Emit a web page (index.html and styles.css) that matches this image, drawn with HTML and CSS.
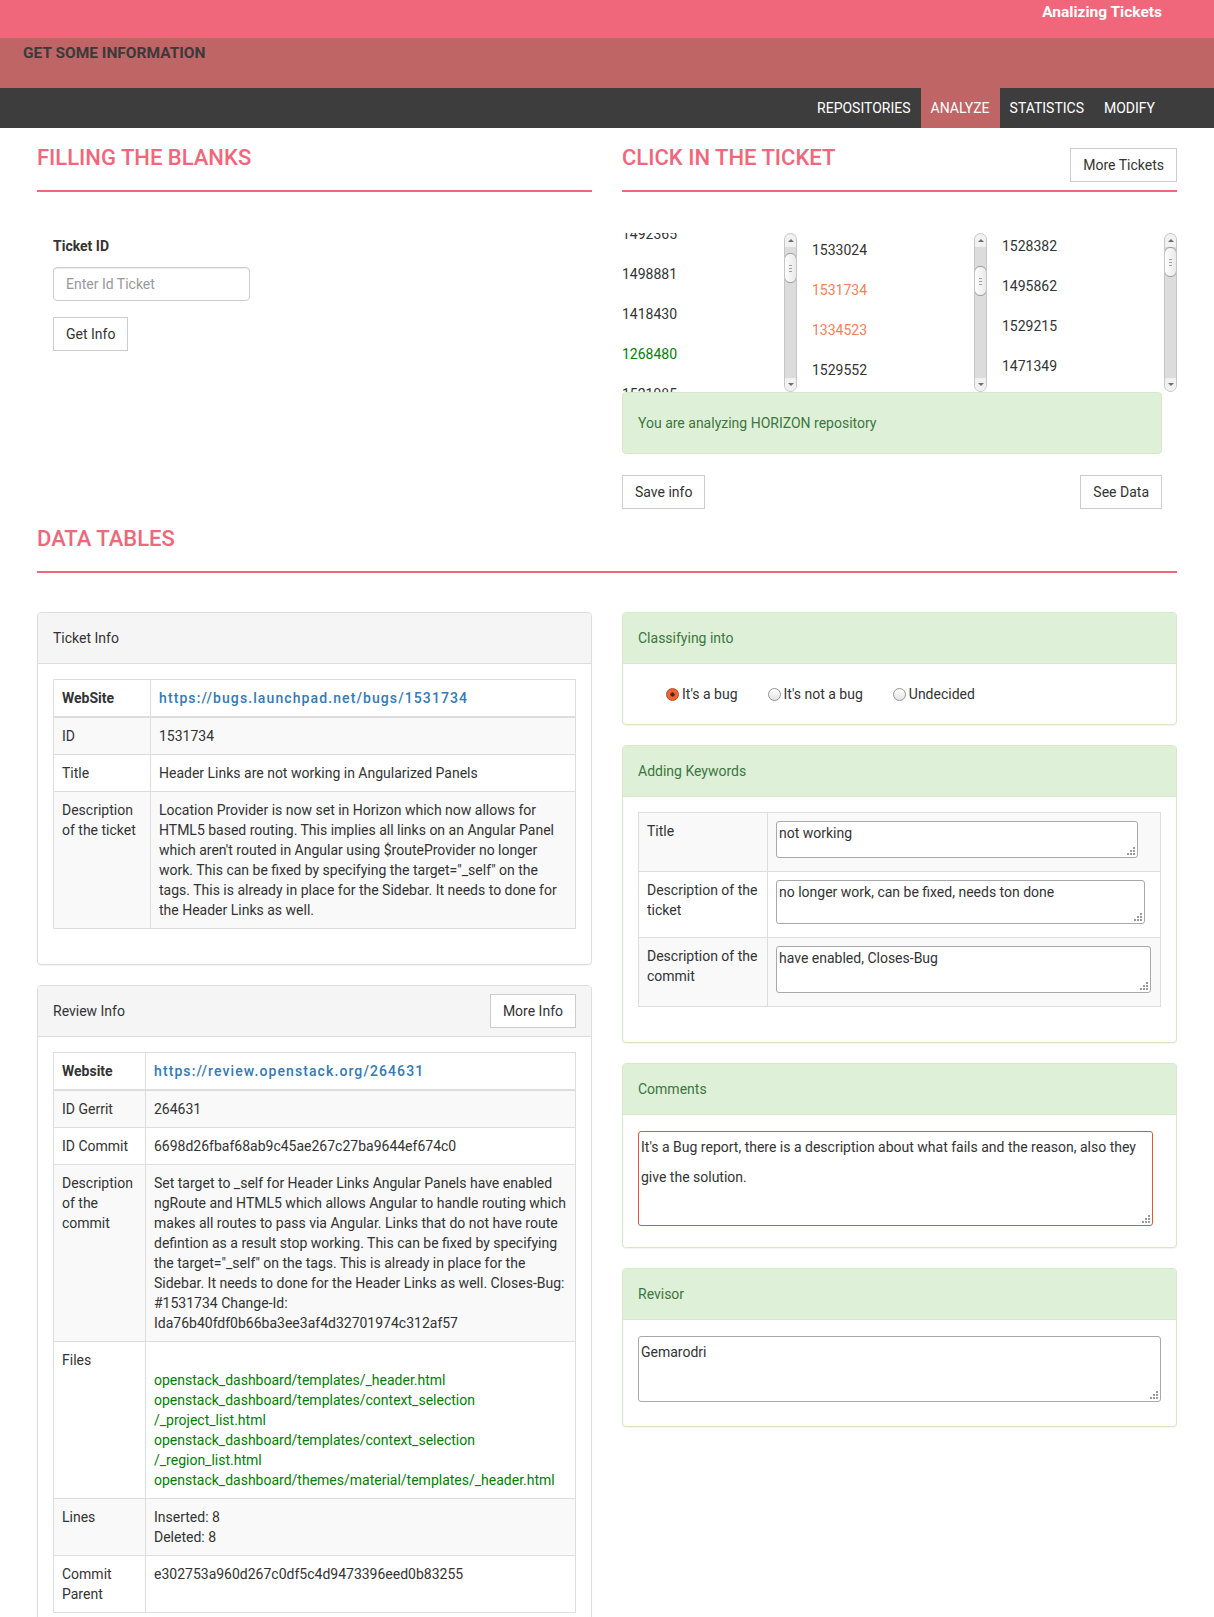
FILE: index.html
```html
<!DOCTYPE html>
<html lang="en">
<head>
<meta charset="utf-8">
<title>Analizing Tickets</title>
<link rel="stylesheet" href="styles.css">
</head>
<body>
<header class="topbar"><span class="brand">Analizing Tickets</span></header>
<div class="subbar"><span class="subtitle">GET SOME INFORMATION</span></div>
<nav class="mainnav">
  <ul class="nav-list">
    <li><a class="nav-link">REPOSITORIES</a></li>
    <li class="active"><a class="nav-link">ANALYZE</a></li>
    <li><a class="nav-link">STATISTICS</a></li>
    <li><a class="nav-link">MODIFY</a></li>
  </ul>
</nav>

<main class="container">
  <div class="row">
    <section class="col">
      <div class="section-head"><h2>FILLING THE BLANKS</h2></div>
      <form class="ticket-form">
        <label class="form-label" for="ticket-id">Ticket ID</label>
        <input id="ticket-id" class="form-input" type="text" placeholder="Enter Id Ticket">
        <button type="button" class="btn">Get Info</button>
      </form>
    </section>

    <section class="col">
      <div class="section-head"><h2>CLICK IN THE TICKET</h2><button type="button" class="btn head-btn">More Tickets</button></div>
      <div class="lists">
        <div class="list">
          <div class="list-view">
            <ul class="list-items scroll-a">
              <li>1492365</li>
              <li>1498881</li>
              <li>1418430</li>
              <li class="t-green">1268480</li>
              <li>1521985</li>
            </ul>
          </div>
          <div class="scrollbar">
            <span class="sb-btn up"></span>
            <span class="sb-track thumb-a"><span class="sb-thumb"></span></span>
            <span class="sb-btn down"></span>
          </div>
        </div>
        <div class="list">
          <div class="list-view">
            <ul class="list-items scroll-b">
              <li>1533024</li>
              <li class="t-coral">1531734</li>
              <li class="t-coral">1334523</li>
              <li>1529552</li>
              <li>1530012</li>
            </ul>
          </div>
          <div class="scrollbar">
            <span class="sb-btn up"></span>
            <span class="sb-track thumb-b"><span class="sb-thumb"></span></span>
            <span class="sb-btn down"></span>
          </div>
        </div>
        <div class="list">
          <div class="list-view">
            <ul class="list-items scroll-c">
              <li>1528382</li>
              <li>1495862</li>
              <li>1529215</li>
              <li>1471349</li>
              <li>1520776</li>
            </ul>
          </div>
          <div class="scrollbar">
            <span class="sb-btn up"></span>
            <span class="sb-track thumb-c"><span class="sb-thumb"></span></span>
            <span class="sb-btn down"></span>
          </div>
        </div>
      </div>
      <div class="alert">You are analyzing HORIZON repository</div>
      <div class="actions">
        <button type="button" class="btn">Save info</button>
        <button type="button" class="btn">See Data</button>
      </div>
    </section>
  </div>

  <div class="section-head"><h2>DATA TABLES</h2></div>

  <div class="row data-row">
    <div class="col">
      <div class="panel">
        <div class="panel-heading">Ticket Info</div>
        <div class="panel-body">
          <table class="table ticket-table">
            <colgroup><col class="c-ticket"><col></colgroup>
            <thead>
              <tr><th>WebSite</th><th><a class="ext-link">https://bugs.launchpad.net/bugs/1531734</a></th></tr>
            </thead>
            <tbody>
              <tr><td>ID</td><td>1531734</td></tr>
              <tr><td>Title</td><td>Header Links are not working in Angularized Panels</td></tr>
              <tr><td>Description of the ticket</td><td>Location Provider is now set in Horizon which now allows for HTML5 based routing. This implies all links on an Angular Panel which aren't routed in Angular using $routeProvider no longer work. This can be fixed by specifying the target="_self" on the tags. This is already in place for the Sidebar. It needs to done for the Header Links as well.</td></tr>
            </tbody>
          </table>
        </div>
      </div>

      <div class="panel">
        <div class="panel-heading">Review Info<button type="button" class="btn">More Info</button></div>
        <div class="panel-body">
          <table class="table review-table">
            <colgroup><col class="c-review"><col></colgroup>
            <thead>
              <tr><th>Website</th><th><a class="ext-link">https://review.openstack.org/264631</a></th></tr>
            </thead>
            <tbody>
              <tr><td>ID Gerrit</td><td>264631</td></tr>
              <tr><td>ID Commit</td><td>6698d26fbaf68ab9c45ae267c27ba9644ef674c0</td></tr>
              <tr><td>Description of the commit</td><td>Set target to _self for Header Links Angular Panels have enabled ngRoute and HTML5 which allows Angular to handle routing which makes all routes to pass via Angular. Links that do not have route defintion as a result stop working. This can be fixed by specifying the target="_self" on the tags. This is already in place for the Sidebar. It needs to done for the Header Links as well. Closes-Bug: #1531734 Change-Id: Ida76b40fdf0b66ba3ee3af4d32701974c312af57</td></tr>
              <tr><td>Files</td><td class="files"><br>openstack_dashboard/templates/_header.html<br>openstack_dashboard/templates/context_selection<br>/_project_list.html<br>openstack_dashboard/templates/context_selection<br>/_region_list.html<br>openstack_dashboard/themes/material/templates/_header.html</td></tr>
              <tr><td>Lines</td><td>Inserted: 8<br>Deleted: 8</td></tr>
              <tr><td>Commit Parent</td><td>e302753a960d267c0df5c4d9473396eed0b83255</td></tr>
            </tbody>
          </table>
        </div>
      </div>
    </div>

    <div class="col">
      <div class="panel panel-success">
        <div class="panel-heading">Classifying into</div>
        <div class="panel-body radio-body">
          <label class="radio-label"><input type="radio" name="kind" class="radio" checked>It's a bug</label>
          <label class="radio-label"><input type="radio" name="kind" class="radio">It's not a bug</label>
          <label class="radio-label"><input type="radio" name="kind" class="radio">Undecided</label>
        </div>
      </div>

      <div class="panel panel-success">
        <div class="panel-heading">Adding Keywords</div>
        <div class="panel-body">
          <table class="table kw-table">
            <colgroup><col class="c-kw"><col></colgroup>
            <tbody>
              <tr><td>Title</td><td><textarea class="ta kw-1">not working</textarea></td></tr>
              <tr><td>Description of the ticket</td><td><textarea class="ta kw-2">no longer work, can be fixed, needs ton done</textarea></td></tr>
              <tr><td>Description of the commit</td><td><textarea class="ta kw-3">have enabled, Closes-Bug</textarea></td></tr>
            </tbody>
          </table>
        </div>
      </div>

      <div class="panel panel-success">
        <div class="panel-heading">Comments</div>
        <div class="panel-body">
          <textarea class="ta big comments">It's a Bug report, there is a description about what fails and the reason, also they give the solution.</textarea>
        </div>
      </div>

      <div class="panel panel-success">
        <div class="panel-heading">Revisor</div>
        <div class="panel-body">
          <textarea class="ta big revisor">Gemarodri</textarea>
        </div>
      </div>
    </div>
  </div>
</main>
</body>
</html>
```

FILE: styles.css
```css
* { box-sizing: border-box; }

html, body { margin: 0; padding: 0; }

body {
  font-family: "Roboto", "Liberation Sans", sans-serif;
  font-size: 14px;
  line-height: 20px;
  color: #333;
  background: #fff;
}

/* ---------- header ---------- */
.topbar {
  height: 38px;
  background: #f0677b;
  display: flex;
  justify-content: flex-end;
  padding-right: 52px;
}
.brand {
  color: #fff;
  font-weight: 700;
  font-size: 15.5px;
  line-height: 24px;
}

.subbar {
  height: 50px;
  background: #c06565;
  padding: 5px 0 0 23px;
}
.subtitle {
  font-weight: 700;
  font-size: 15.5px;
  color: #3a3a3a;
  line-height: 20px;
}

.mainnav {
  height: 40px;
  background: #3d3d3d;
  display: flex;
  justify-content: flex-end;
  padding-right: 49px;
}
.nav-list {
  list-style: none;
  margin: 0;
  padding: 0;
  display: flex;
}
.nav-link {
  display: block;
  padding: 0 10px;
  line-height: 40px;
  color: #fff;
  font-size: 14px;
}
.nav-list .active { background: #c06565; }

/* ---------- layout ---------- */
.container {
  width: 1140px;
  margin: 0 auto;
}
.row {
  display: grid;
  grid-template-columns: 1fr 1fr;
  column-gap: 30px;
  align-items: start;
}
.col { min-width: 0; }

.section-head {
  padding-top: 18px;
  height: 64px;
  border-bottom: 2px solid #f0677b;
  display: flex;
  justify-content: space-between;
  align-items: flex-start;
}
.section-head h2 {
  margin: 0;
  font-size: 22px;
  line-height: 24px;
  font-weight: 500;
  color: #f0677b;
}
.head-btn { margin-top: 2px; }

/* ---------- buttons / inputs ---------- */
.btn {
  font-family: inherit;
  font-size: 14px;
  line-height: 20px;
  color: #333;
  background: #fff;
  border: 1px solid #ccc;
  border-radius: 0;
  padding: 6px 12px;
  height: 34px;
  cursor: pointer;
}

.ticket-form {
  padding: 44px 0 0 16px;
  display: flex;
  flex-direction: column;
  align-items: flex-start;
}
.form-label {
  font-weight: 700;
  line-height: 20px;
  margin-bottom: 11px;
}
.form-input {
  width: 197px;
  height: 34px;
  padding: 6px 12px;
  font-family: inherit;
  font-size: 14px;
  color: #555;
  border: 1px solid #ccc;
  border-radius: 4px;
  box-shadow: inset 0 1px 1px rgba(0,0,0,.075);
  margin-bottom: 16px;
}
.form-input::placeholder { color: #999; }

/* ---------- ticket lists ---------- */
.lists {
  margin-top: 41px;
  height: 159px;
  display: grid;
  grid-template-columns: repeat(3, 1fr);
  grid-template-rows: 159px;
  column-gap: 15px;
}
.list {
  display: flex;
  min-width: 0;
  min-height: 0;
  height: 159px;
  overflow: hidden;
}
.list-view {
  flex: 1;
  overflow: hidden;
}
.list-items {
  list-style: none;
  margin: 0;
  padding: 0;
}
.list-items li {
  padding: 10px 0;
  line-height: 20px;
  color: #333;
}
.scroll-a { margin-top: -19px; }
.scroll-b { margin-top: -3px; }
.scroll-c { margin-top: -7px; }
.t-green { color: #008000 !important; }
.t-coral { color: #f3805a !important; }

.scrollbar {
  width: 13px;
  height: 159px;
  flex: none;
  display: flex;
  flex-direction: column;
  border: 1px solid #c6c6c6;
  border-radius: 7px;
  background: #dcdcdc;
  overflow: hidden;
}
.sb-btn {
  height: 13px;
  flex: none;
  background: #f1f1f1;
  display: flex;
  align-items: center;
  justify-content: center;
}
.sb-btn.up::before {
  content: "";
  border-left: 3px solid transparent;
  border-right: 3px solid transparent;
  border-bottom: 3px solid #6e6e6e;
}
.sb-btn.down::before {
  content: "";
  border-left: 3px solid transparent;
  border-right: 3px solid transparent;
  border-top: 3px solid #6e6e6e;
}
.sb-track {
  flex: 1;
  min-height: 0;
  display: block;
}
.thumb-a { padding-top: 6px; }
.thumb-b { padding-top: 19px; }
.thumb-c { padding-top: 0; }
.sb-thumb {
  display: flex;
  align-items: center;
  justify-content: center;
  height: 30px;
  margin: 0 -1px;
  border: 1px solid #9c9c9c;
  border-radius: 6px;
  background: linear-gradient(to right, #fdfdfd, #e9e9e9);
}
.sb-thumb::before {
  content: "";
  width: 3px;
  height: 7px;
  background: repeating-linear-gradient(to bottom, #a0a0a0 0 1px, transparent 1px 3px);
}

.alert {
  margin-right: 15px;
  padding: 20px 15px;
  background: #dff0d8;
  border: 1px solid #d6e9c6;
  border-radius: 4px;
  color: #3c763d;
}
.actions {
  margin: 21px 15px 0 0;
  display: flex;
  justify-content: space-between;
}

/* ---------- panels ---------- */
.data-row { margin-top: 39px; }

.panel {
  border: 1px solid #ddd;
  border-radius: 4px;
  margin-bottom: 20px;
  background: #fff;
  box-shadow: 0 1px 1px rgba(0,0,0,.05);
}
.panel-heading {
  height: 51px;
  padding: 0 15px;
  display: flex;
  align-items: center;
  justify-content: space-between;
  background: #f5f5f5;
  border-bottom: 1px solid #ddd;
  border-radius: 3px 3px 0 0;
  color: #333;
}
.panel-body { padding: 15px; }

.panel-success { border-color: #d6e9c6; }
.panel-success .panel-heading {
  background: #dff0d8;
  border-bottom-color: #d6e9c6;
  color: #3c763d;
}

/* ---------- tables ---------- */
.table {
  width: 100%;
  table-layout: fixed;
  border-collapse: collapse;
  margin-bottom: 20px;
  border: 1px solid #ddd;
}
.table th, .table td {
  padding: 8px;
  line-height: 20px;
  vertical-align: top;
  text-align: left;
  border: 1px solid #ddd;
}
.table th { font-weight: 700; }
.table thead th { border-bottom-width: 2px; }
.table tbody tr:nth-child(odd) { background: #f9f9f9; }

.c-ticket { width: 97px; }
.c-review { width: 92px; }
.c-kw { width: 129px; }

.ext-link {
  color: #337ab7;
  font-weight: 500;
  letter-spacing: 1.1px;
  text-decoration: none;
}
.files { color: #008000; }

/* ---------- radios ---------- */
.radio-body {
  padding: 20px 15px 20px 43px;
  display: flex;
  gap: 30px;
}
.radio-label {
  display: inline-flex;
  align-items: center;
  line-height: 20px;
  color: #333;
}
.radio {
  appearance: none;
  -webkit-appearance: none;
  width: 13px;
  height: 13px;
  margin: 0 3px 0 0;
  border: 1px solid #939393;
  border-radius: 50%;
  background: linear-gradient(#ffffff, #e4e4e4);
}
.radio:checked {
  border-color: #c2481e;
  background: radial-gradient(circle, #4d2316 0 1.8px, #e9652f 2.4px);
}

/* ---------- textareas ---------- */
.ta {
  display: block;
  font-family: inherit;
  font-size: 14px;
  line-height: 20px;
  color: #333;
  padding: 1px 2px;
  border: 1px solid #a9a9a9;
  border-radius: 3px;
  resize: none;
  margin: 0 0 5px;
  background-color: #fff;
  background-image:
    radial-gradient(circle, #9a9a9a 0.8px, transparent 1.1px),
    radial-gradient(circle, #9a9a9a 0.8px, transparent 1.1px),
    radial-gradient(circle, #9a9a9a 0.8px, transparent 1.1px),
    radial-gradient(circle, #9a9a9a 0.8px, transparent 1.1px),
    radial-gradient(circle, #9a9a9a 0.8px, transparent 1.1px),
    radial-gradient(circle, #9a9a9a 0.8px, transparent 1.1px);
  background-size: 2px 2px;
  background-repeat: no-repeat;
  background-position:
    right 2px bottom 2px,
    right 5px bottom 2px,
    right 8px bottom 2px,
    right 2px bottom 5px,
    right 5px bottom 5px,
    right 2px bottom 8px;
}
.kw-1 { width: 362px; height: 37px; }
.kw-2 { width: 369px; height: 44px; }
.kw-3 { width: 375px; height: 47px; }

.big {
  line-height: 30px;
  padding: 0 2px;
  margin: 1px 0 6px;
}
.comments {
  width: 515px;
  height: 95px;
  border-color: #e0592a;
}
.revisor {
  width: 523px;
  height: 66px;
  margin-bottom: 9px;
}
```
